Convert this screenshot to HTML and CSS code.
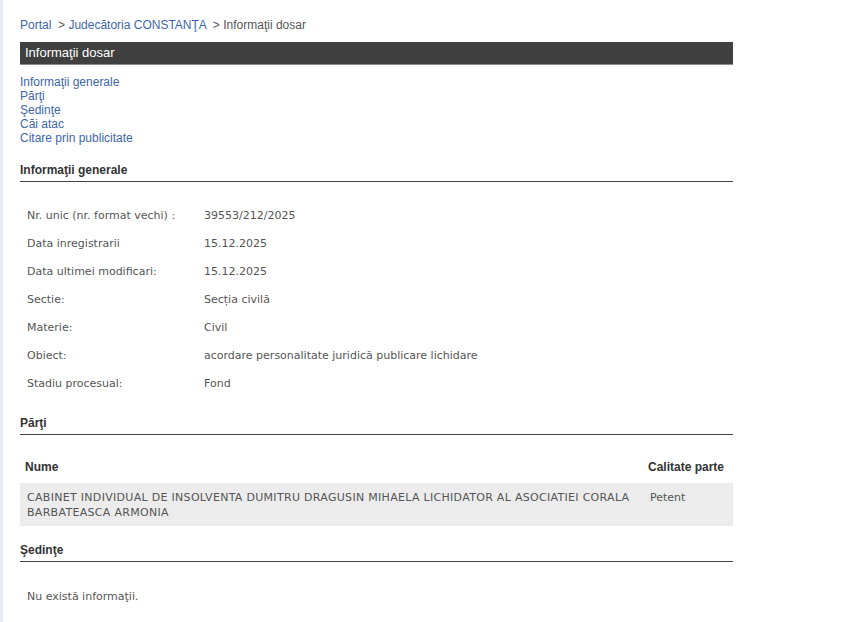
FILE: index.html
```html
<!DOCTYPE html>
<html lang="ro">

<head>
    <meta charset="UTF-8">
    <meta name="viewport" content="width=device-width, initial-scale=1.0">
    <title>Informaţii dosar</title>
    <link rel="stylesheet" href="styles.css">
</head>

<body>
    <div class="page">
        <!-- Breadcrumb -->
        <div class="breadcrumb">
            <a href="#">Portal</a> &nbsp;&gt; <a href="#">Judecătoria CONSTANŢA</a> &nbsp;&gt; Informaţii dosar
        </div>

        <div class="title-bar">Informaţii dosar</div>

        <!-- Anchors -->
        <ul class="anchors">
            <li><a href="#generale">Informaţii generale</a></li>
            <li><a href="#parti">Părţi</a></li>
            <li><a href="#sedinte">Şedinţe</a></li>
            <li><a href="#cai">Căi atac</a></li>
            <li><a href="#citare">Citare prin publicitate</a></li>
        </ul>

        <!-- Informatii generale -->
        <h2 class="section-title" id="generale">Informaţii generale</h2>
        <table class="info-table">
            <tr><td class="label">Nr. unic (nr. format vechi) :</td><td>39553/212/2025</td></tr>
            <tr><td class="label">Data inregistrarii</td><td>15.12.2025</td></tr>
            <tr><td class="label">Data ultimei modificari:</td><td>15.12.2025</td></tr>
            <tr><td class="label">Sectie:</td><td>Secția civilă</td></tr>
            <tr><td class="label">Materie:</td><td>Civil</td></tr>
            <tr><td class="label">Obiect:</td><td>acordare personalitate juridică publicare lichidare</td></tr>
            <tr><td class="label">Stadiu procesual:</td><td>Fond</td></tr>
        </table>

        <!-- Parti -->
        <h2 class="section-title" id="parti">Părţi</h2>
        <table class="parti-table">
            <tr>
                <th>Nume</th>
                <th class="calitate">Calitate parte</th>
            </tr>
            <tr class="shaded">
                <td class="nume">CABINET INDIVIDUAL DE INSOLVENTA DUMITRU DRAGUSIN MIHAELA LICHIDATOR AL ASOCIATIEI CORALA BARBATEASCA ARMONIA</td>
                <td class="calitate">Petent</td>
            </tr>
        </table>

        <!-- Sedinte -->
        <h2 class="section-title sedinte" id="sedinte">Şedinţe</h2>
        <p class="empty">Nu există informaţii.</p>
    </div>
</body>

</html>
```

FILE: styles.css
```css
/* Reset */
* {
    box-sizing: border-box;
    margin: 0;
    padding: 0;
}

body {
    font-family: "Liberation Sans", Arial, sans-serif;
    font-size: 12px;
    line-height: 14px;
    color: #333;
    background-color: #fff;
    border-left: 3px solid #e7eaef;
    min-height: 622px;
}

a {
    color: #4066aa;
    text-decoration: none;
}

.page {
    width: 730px;
    padding: 18px 0 0 17px;
}

.breadcrumb {
    color: #555;
}

.title-bar {
    margin-top: 10px;
    height: 23px;
    line-height: 22px;
    padding-left: 5px;
    font-size: 13px;
    color: #fff;
    background-color: #404040;
    border-bottom: 1px solid #8a8a8a;
}

.anchors {
    list-style: none;
    margin-top: 10px;
}

.section-title {
    margin-top: 18px;
    padding-bottom: 4px;
    font-size: 12px;
    line-height: 14px;
    font-weight: bold;
    color: #333;
    border-bottom: 1px solid #444;
}

.section-title.sedinte {
    margin-top: 17px;
}

/* Tables */
table {
    width: 100%;
    border-collapse: collapse;
    font-family: "DejaVu Sans", Tahoma, sans-serif;
    font-size: 11px;
    color: #555;
}

.info-table {
    margin-top: 20px;
}

.info-table td {
    height: 28px;
    padding: 0 7px;
    vertical-align: middle;
}

.info-table td.label {
    width: 177px;
}

.parti-table {
    margin-top: 14px;
}

.parti-table th {
    font-family: "Liberation Sans", Arial, sans-serif;
    font-size: 12px;
    font-weight: bold;
    color: #333;
    text-align: left;
    padding: 11px 5px 9px 5px;
    line-height: 14px;
}

.parti-table td {
    padding: 7px 7px 6px 7px;
    line-height: 15px;
    vertical-align: top;
}

.parti-table td.nume {
    letter-spacing: 0.3px;
}

.parti-table .calitate {
    width: 90px;
}

.parti-table .shaded td {
    background-color: #ececec;
}

.empty {
    font-family: "DejaVu Sans", Tahoma, sans-serif;
    font-size: 11px;
    color: #555;
    margin-top: 27px;
    padding-left: 7px;
    line-height: 15px;
}
```
